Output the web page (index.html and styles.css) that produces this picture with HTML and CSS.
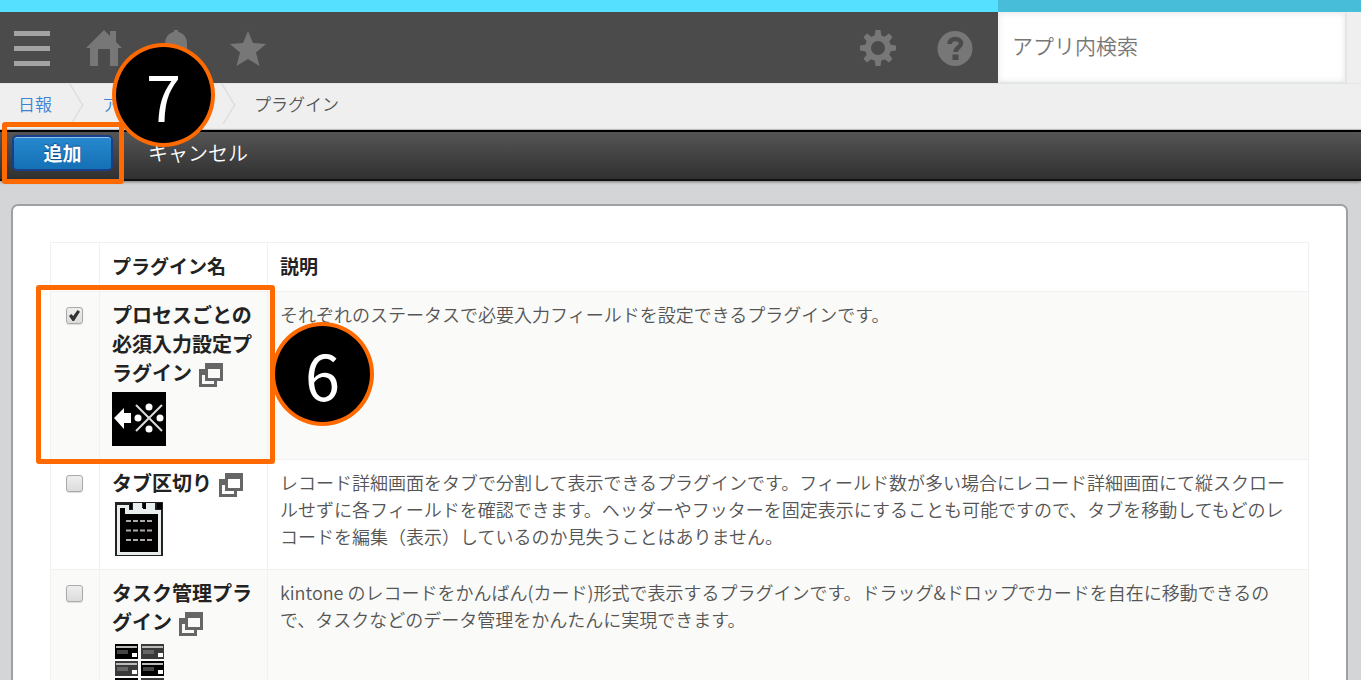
FILE: index.html
```html
<!DOCTYPE html>
<html lang="ja">
<head>
    <meta charset="UTF-8">
    <meta name="viewport" content="width=device-width, initial-scale=1.0">
    <title>プラグイン</title>
    <link rel="stylesheet" href="styles.css">
</head>
<body>
    <!-- shared icon -->
    <svg class="defs" aria-hidden="true">
        <symbol id="icon-window" viewBox="0 0 24 24">
            <path fill="#666" fill-rule="evenodd" d="M6 0h18v18H6zM9 6v9h12V6z"/>
            <path fill="#666" d="M0 6h7v6H3v9h12v-4h3v7H0z"/>
        </symbol>
    </svg>

    <header class="header">
        <nav class="header-nav">
            <a href="#" class="menu" aria-label="メニュー">
                <svg width="36" height="36" viewBox="0 0 36 36" fill="#a3a3a3">
                    <path d="M0 1h36v5H0zM0 16h36v5H0zM0 31h36v5H0z"/>
                </svg>
            </a>
            <a href="#" aria-label="ホーム">
                <svg width="36" height="36" viewBox="0 0 36 36" fill="#777">
                    <path d="M18 0l6 6V1h6v11l6 6h-4v18h-8V19h-12v17H4V18H0z"/>
                </svg>
            </a>
            <a href="#" aria-label="通知">
                <svg width="36" height="36" viewBox="0 0 36 36" fill="#777">
                    <path d="M16 0h4v2c6 1 9 6 9 12v8l4 6v2H3v-2l4-6v-8C7 8 10 3 16 2zM14 32h8a4 4 0 0 1-8 0z"/>
                </svg>
            </a>
            <a href="#" aria-label="お気に入り">
                <svg width="36" height="36" viewBox="0 0 36 36" fill="#777">
                    <path d="M18 1l5 12 13 1-10 8.500 3.500 13.500L18 29 6.500 36 10 22.500 0 14l13-1z"/>
                </svg>
            </a>
        </nav>
        <nav class="header-tools">
            <a href="#" aria-label="設定">
                <svg width="36" height="36" viewBox="0 0 36 36">
                    <g fill="#777">
                        <path d="M15.500 0h5l1 7h-7zM15.500 36h5l1-7h-7zM0 15.500v5l7 1v-7zM36 15.500v5l-7 1v-7z"/>
                        <path d="M15.500 0h5l1 7h-7zM15.500 36h5l1-7h-7zM0 15.500v5l7 1v-7zM36 15.500v5l-7 1v-7z" transform="rotate(45 18 18)"/>
                    </g>
                    <circle cx="18" cy="18" r="10" fill="none" stroke="#777" stroke-width="6"/>
                </svg>
            </a>
            <a href="#" aria-label="ヘルプ">
                <svg width="36" height="36" viewBox="0 0 36 36">
                    <circle cx="18" cy="18.500" r="17.500" fill="#777"/>
                    <path d="M12.500 14c.2-7 11.500-6.500 11.500-.5 0 4-5.500 4-5.500 8.500" fill="none" stroke="#4b4b4b" stroke-width="4.500"/>
                    <path d="M15.500 24.500h6v5.500h-6z" fill="#4b4b4b"/>
                </svg>
            </a>
        </nav>
        <div class="search">
            <input type="text" aria-label="アプリ内検索" placeholder="アプリ内検索">
        </div>
    </header>

    <nav class="breadcrumb">
        <ul>
            <li><a href="#">日報</a></li>
            <li><a href="#">アプリの設定</a></li>
            <li>プラグイン</li>
        </ul>
    </nav>

    <div class="toolbar">
        <button type="button" class="btn-add">追加</button>
        <button type="button" class="btn-cancel">キャンセル</button>
        <div class="frame frame-add"></div>
        <div class="badge badge-add">7</div>
    </div>

    <main class="panel">
        <table class="plugins">
            <thead>
                <tr>
                    <th class="col-check"></th>
                    <th class="col-name">プラグイン名</th>
                    <th>説明</th>
                </tr>
            </thead>
            <tbody>
                <tr>
                    <td class="check"><input type="checkbox" aria-labelledby="plugin-1" checked></td>
                    <td class="name">
                        <span id="plugin-1">プロセスごとの必須入力設定プラグイン</span>
                        <a href="#" aria-label="別ウィンドウで開く"><svg width="24" height="24"><use href="#icon-window"/></svg></a>
                        <svg class="logo" width="54" height="54" viewBox="0 0 54 54">
                            <path d="M0 0h54v54H0z"/>
                            <path d="M2 26l10-10v5h7v10h-7v6z" fill="#fff"/>
                            <path d="M24 13l26 26M50 13L24 39" stroke="#ddd" stroke-width="2"/>
                            <g fill="#fff">
                                <circle cx="37" cy="15" r="3.500"/>
                                <circle cx="26" cy="26" r="3.500"/>
                                <circle cx="48" cy="26" r="3.500"/>
                                <circle cx="37" cy="37" r="3.500"/>
                            </g>
                        </svg>
                    </td>
                    <td class="desc">それぞれのステータスで必要入力フィールドを設定できるプラグインです。</td>
                </tr>
                <tr>
                    <td class="check"><input type="checkbox" aria-labelledby="plugin-2"></td>
                    <td class="name">
                        <span id="plugin-2">タブ区切り</span>
                        <a href="#" aria-label="別ウィンドウで開く"><svg width="24" height="24"><use href="#icon-window"/></svg></a>
                        <svg class="logo" width="54" height="54" viewBox="0 0 54 54">
                            <path d="M3 0h48v54H3z" fill="#222"/>
                            <path d="M5 3h12v5h4V1h9v5h4V1h9v7h6v45H5z" fill="#e8eeee"/>
                            <path d="M8 6h5v6h33v38H8z"/>
                            <path d="M18 1h2v6h-2zM31 1h3v6h-3zM45 1h5v6h-5z"/>
                            <path d="M14 19h26M14 28.500h26M14 38h26" stroke="#aaa" stroke-width="2" stroke-dasharray="5 2"/>
                        </svg>
                    </td>
                    <td class="desc">レコード詳細画面をタブで分割して表示できるプラグインです。フィールド数が多い場合にレコード詳細画面にて縦スクロールせずに各フィールドを確認できます。ヘッダーやフッターを固定表示にすることも可能ですので、タブを移動してもどのレコードを編集（表示）しているのか見失うことはありません。</td>
                </tr>
                <tr>
                    <td class="check"><input type="checkbox" aria-labelledby="plugin-3"></td>
                    <td class="name">
                        <span id="plugin-3">タスク管理プラグイン</span>
                        <a href="#" aria-label="別ウィンドウで開く"><svg width="24" height="24"><use href="#icon-window"/></svg></a>
                        <svg class="logo" width="54" height="54" viewBox="0 0 54 54">
                            <defs>
                                <g id="card">
                                    <path d="M0 0h23v15H0z"/>
                                    <path d="M1 2h21v2H1z" fill="#bbb"/>
                                    <path d="M2 6h11v4H2z" fill="#444"/>
                                    <path d="M17 9h5v4h-5z" fill="#fff"/>
                                </g>
                                <g id="card-gray">
                                    <path d="M0 0h23v15H0z" fill="#3a3a3a"/>
                                    <path d="M1 2h21v2H1z" fill="#bbb"/>
                                    <path d="M2 6h11v4H2z" fill="#666"/>
                                    <path d="M17 9h5v4h-5z" fill="#fff"/>
                                </g>
                            </defs>
                            <use href="#card" x="3" y="3"/>
                            <use href="#card-gray" x="29" y="3"/>
                            <use href="#card-gray" x="3" y="20"/>
                            <use href="#card" x="29" y="20"/>
                            <use href="#card" x="3" y="37"/>
                            <use href="#card-gray" x="29" y="37"/>
                        </svg>
                    </td>
                    <td class="desc">kintone のレコードをかんばん(カード)形式で表示するプラグインです。ドラッグ&amp;ドロップでカードを自在に移動できるので、タスクなどのデータ管理をかんたんに実現できます。</td>
                </tr>
            </tbody>
        </table>
        <div class="badge badge-select">6</div>
        <div class="frame frame-select"></div>
    </main>
</body>
</html>
```
FILE: styles.css
```css
* {
    box-sizing: border-box;
}

body {
    font-family: "Noto Sans CJK JP", sans-serif;
    font-weight: 350;
    margin: 0;
    height: 100vh;
    overflow: hidden;
    background-color: #d3d5d7;
    color: #555;
}

.defs {
    position: absolute;
    width: 0;
    height: 0;
}

/* header */
.header {
    display: flex;
    height: 84px;
    border-top: 12px solid #55e0ff;
    border-bottom: 1px solid #e2e6e6;
    background-color: #4b4b4b;
}

.header svg {
    display: block;
}

.header-nav,
.header-tools {
    display: flex;
    align-items: center;
}

.header-nav {
    flex: 1;
    gap: 36px;
    padding-left: 14px;
}

.header-tools {
    gap: 41px;
    padding-right: 25px;
}

.search {
    width: 363px;
    margin-top: -12px;
    border-top: 12px solid #48bdd9;
    padding: 1px 14px 0 0;
    background-color: #efefef;
}

.search input {
    width: 100%;
    height: 70px;
    padding: 0 14px 6px;
    border: 1px solid #e2e6e6;
    border-width: 0 2px 1px 0;
    background-color: #fff;
    box-shadow: inset 0 0 6px #e4e4e4;
    font-family: inherit;
    font-size: 21px;
    font-weight: 350;
}

.search input::placeholder {
    color: #777;
}

/* breadcrumb */
.breadcrumb {
    height: 46px;
    background-color: #efefef;
    border-bottom: 1px solid #ccc;
    font-size: 17px;
    line-height: 40px;
}

.breadcrumb ul {
    display: flex;
    list-style: none;
    margin: 0;
    padding: 0 0 0 18px;
    overflow: hidden;
}

.breadcrumb li {
    display: flex;
}

.breadcrumb li:not(:last-child)::after {
    content: "";
    width: 32px;
    height: 32px;
    margin: 4px 16px 0 0;
    border: 2px solid #dedede;
    border-width: 2px 2px 0 0;
    transform: scaleX(0.6) rotate(45deg);
}

.breadcrumb a {
    color: #3e82d2;
    text-decoration: none;
}

/* toolbar */
.toolbar {
    position: relative;
    display: flex;
    align-items: flex-start;
    gap: 35px;
    height: 51px;
    padding: 3px 12px;
    border-top: 2px solid #000;
    border-bottom: 2px solid #111;
    background: linear-gradient(#555, #303030);
    box-shadow: 0 1px 3px #777;
}

.toolbar button {
    height: 36px;
    padding: 0;
    font-family: inherit;
    font-size: 20px;
    line-height: 32px;
    color: #fff;
    cursor: pointer;
}

.toolbar .btn-add {
    width: 101px;
    border: 2px solid #173f8c;
    border-radius: 5px;
    background: linear-gradient(#2789d0, #1570b4);
    box-shadow: inset 0 1px 0 #8ec2ea;
    font-size: 19px;
    font-weight: bold;
    text-shadow: 0 -1px 1px #0c4a8a;
}

.btn-cancel {
    border: none;
    background: none;
    font-weight: 350;
}

/* panel */
.panel {
    position: relative;
    margin: 23px 13px 0 11px;
    padding: 36px 37px;
    border: 2px solid #a0a0a0;
    border-radius: 7px;
    background-color: #fff;
}

.plugins {
    width: 100%;
    border-collapse: collapse;
    table-layout: fixed;
}

.plugins th,
.plugins td {
    border: 1px solid #f1f1f1;
    padding: 9px 12px 13px;
    text-align: left;
    vertical-align: top;
}

.plugins th {
    padding: 9px 12px 11px;
    color: #222;
    font-size: 19px;
    line-height: 28px;
}

.col-check {
    width: 49px;
}

.col-name {
    width: 168px;
}

.plugins tbody tr:nth-child(odd) {
    background-color: #fafaf8;
}

.plugins .check {
    padding: 15px 0 0 15px;
}

.plugins .name {
    padding: 8px 12px 13px;
    color: #222;
    font-size: 20px;
    font-weight: bold;
    line-height: 29px;
}

.name a svg {
    margin-left: 2px;
    vertical-align: -6px;
}

.name a {
    display: inline-block;
    height: 29px;
}

.logo {
    display: block;
    margin-top: 5px;
}

.plugins .desc {
    font-size: 18px;
    line-height: 27px;
}

.check input {
    appearance: none;
    display: block;
    width: 17px;
    height: 17px;
    margin: 0;
    border: 1px solid #aaa;
    border-radius: 3px;
    background: linear-gradient(#eee, #dcdcdc);
    box-shadow: 0 1px 1px #ddd;
}

.check input:checked::before {
    content: "";
    display: block;
    width: 11px;
    height: 11px;
    margin: 2px;
    background-color: #333;
    clip-path: polygon(0 55%, 20% 36%, 38% 54%, 78% 0, 100% 16%, 46% 100%, 32% 100%);
}

/* step marks */
.frame {
    position: absolute;
    border: 5px solid #ff6a00;
    border-radius: 3px;
}

.frame-add {
    top: -10px;
    left: 2px;
    width: 122px;
    height: 62px;
}

.frame-select {
    top: 79px;
    left: 23px;
    width: 239px;
    height: 179px;
}

.badge {
    position: absolute;
    width: 103px;
    height: 104px;
    border: 4px solid #ff6a00;
    border-radius: 50%;
    background-color: #000;
    color: #fff;
    font-size: 63px;
    font-weight: 400;
    line-height: 96px;
    text-align: center;
}

.badge-add {
    top: -89px;
    left: 112px;
}

.badge-select {
    top: 116px;
    left: 258px;
}
```
